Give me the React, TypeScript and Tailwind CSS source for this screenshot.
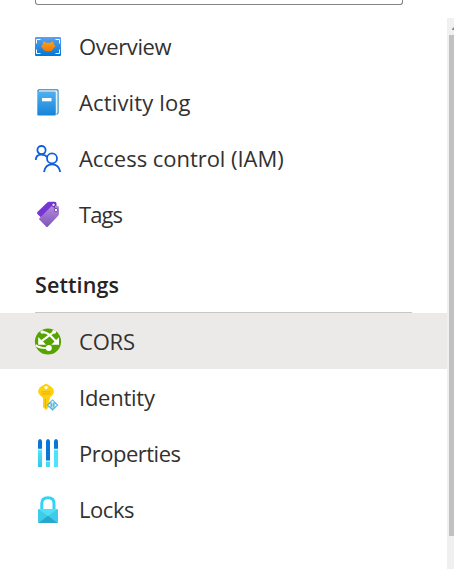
import type { ReactNode } from "react";

function Icon({ children }: { children: ReactNode }) {
  return (
    <svg width="28" height="28" viewBox="0 0 28 28" className="shrink-0" fill="none" aria-hidden="true">
      {children}
    </svg>
  );
}

const OverviewIcon = () => (
  <Icon>
    <defs>
      <linearGradient id="ov" x1="0" y1="0" x2="0" y2="1"><stop stopColor="#5ea0ef" /><stop offset="1" stopColor="#0078d4" /></linearGradient>
      <linearGradient id="ovo" x1="0" y1="0" x2="0" y2="1"><stop stopColor="#faa21d" /><stop offset="1" stopColor="#f07800" /></linearGradient>
    </defs>
    <rect x="1" y="4" width="26" height="19" rx="1" fill="url(#ov)" />
    <path d="M2.5 10.5V6.5H6.5M21.5 6.5H25.5V10.5M25.5 16.5V20.5H21.5M6.5 20.5H2.5V16.5" stroke="#fff" strokeWidth="1" />
    <path d="M9.5 8.2L12.5 9.7H16L19 8.2L20 11.2L21.5 13.5L19.5 15.5L17.5 18L14.5 18.5L11 18L9 16L7 13.5L8.6 11.5Z" fill="url(#ovo)" />
  </Icon>
);

const LogIcon = () => (
  <Icon>
    <defs><linearGradient id="lg" x1="0" y1="0" x2="0" y2="1"><stop stopColor="#50b0ee" /><stop offset="1" stopColor="#1683da" /></linearGradient></defs>
    <path d="M4 3V1.8Q4 .8 5.5 .8H23.2Q24 .8 24 1.8V24Q24 25 22 25" stroke="#277fb5" strokeWidth="1.2" />
    <path d="M5 2H22.8V24.3H21" stroke="#d8effb" strokeWidth="1" />
    <rect x="3.3" y="2.6" width="18.5" height="24" rx="1" fill="url(#lg)" />
    <rect x="8" y="9" width="9.5" height="3.3" fill="#fff" />
  </Icon>
);

const PeopleIcon = () => (
  <Icon>
    <g stroke="#0f5fdc" strokeWidth="1.8">
      <circle cx="7.5" cy="5.1" r="4.1" />
      <circle cx="18" cy="13.4" r="5" />
      <path d="M1.8 15C1.8 11.3 3.7 9.6 7.3 9.6C10.2 9.6 12 10.4 13.2 12.4M10 27C10.8 22 14 19.3 18.2 19.3C22.5 19.3 25.3 22 26.3 27" />
    </g>
  </Icon>
);

const TagsIcon = () => (
  <Icon>
    <defs><linearGradient id="tg" x1="0" y1="0" x2="0" y2="1"><stop stopColor="#b78be2" /><stop offset="1" stopColor="#7c55b5" /></linearGradient></defs>
    <path d="M13.5 1.2Q14.2 .7 15 .7H20.5Q22.5 .7 22.5 2.5V7L7.5 17L3.4 13Q2.6 12 3.4 11Z" fill="#7736d3" />
    <path d="M17.6 5.1Q18.2 4.5 19 4.5H22.5Q25 4.5 25 6.5V12.8Q25 14 24.2 14.8L14 25.5Q13 26.5 12 25.5L5.2 18.6Q4.7 18 5.3 17.4Z" fill="url(#tg)" />
    <circle cx="19.5" cy="3.8" r="1.8" fill="#e8dafb" stroke="#4d248d" strokeWidth=".9" />
    <circle cx="22" cy="9" r="1.7" fill="#fff" stroke="#6940a6" strokeWidth=".9" />
    <path d="M19.5 5.6L21.3 7.5" stroke="#4d248d" strokeWidth=".8" />
  </Icon>
);

const CorsIcon = () => (
  <Icon>
    <defs><clipPath id="cc"><circle cx="14" cy="14.5" r="13.1" /></clipPath></defs>
    <g clipPath="url(#cc)">
      <rect width="28" height="28" fill="#57a300" />
      <path d="M8.5 5Q12.5 5 16.5 8.8L22 14.5M21 4.3L16 7.8L8 13.8" stroke="#fff" strokeWidth="2.1" />
      <path d="M4.2 10V17.8H12.2ZM25 10.2V17.8H17.2Z" fill="#fff" />
      <path d="M1.5 18Q5.5 21.4 13 21" stroke="#fff" strokeWidth="1.8" />
      <circle cx="8.2" cy="5" r="1.8" fill="#fff" />
      <circle cx="20.2" cy="4.8" r="2" fill="#fff" />
      <circle cx="14.8" cy="21" r="3" fill="#fff" />
    </g>
  </Icon>
);

const IdentityIcon = () => (
  <Icon>
    <path d="M9.2 2.2L11 1.1Q12 .6 13 1.1L14.8 2.2Q19.9 4.8 19.9 8.3Q19.9 11.6 15.8 14.7V16.8L14.8 18L15.8 19.2V20.5L14.8 21.7L15.8 23L12.6 26.5Q12 27.1 11.4 26.5L9 24V14.7Q4.1 11.6 4.1 8.3Q4.1 4.8 9.2 2.2Z" fill="#ffd012" />
    <circle cx="12" cy="4.6" r="1.7" fill="#fff" />
    <path d="M7.5 8.9H16.5M7.5 11H16.5" stroke="#e5ad0b" strokeWidth=".9" />
    <path d="M11.4 16V25" stroke="#f0ac00" strokeWidth="1.1" />
    <path d="M18.5 16.2L24.3 22L18.5 27.8L12.7 22Z" fill="#58b4d8" />
    <path d="M18.5 18.5L21.5 22.3L18.5 25.3L15.5 22.3ZM18.5 18.5V25.3" stroke="#c8edf8" strokeWidth=".7" />
    <circle cx="18.5" cy="18.7" r="1" fill="#fff" />
    <circle cx="15.5" cy="22.3" r="1" fill="#fff" />
    <circle cx="21.5" cy="22.3" r="1" fill="#fff" />
  </Icon>
);

const PropertiesIcon = () => (
  <Icon>
    <defs><linearGradient id="pr" x1="0" y1="1" x2="0" y2="0"><stop stopColor="#32c7e8" /><stop offset="1" stopColor="#50e6ff" /></linearGradient></defs>
    <rect x="4" y="10" width="4" height="18" rx=".6" fill="url(#pr)" />
    <rect x="12" y="22" width="4" height="6" rx=".6" fill="#42daf5" />
    <rect x="20" y="10" width="4" height="18" rx=".6" fill="#4ce3fc" />
    <path d="M4 10V2L5 .3H7L8 2V10ZM12 22V2L13 .3H15L16 2V22ZM20 10V2L21 .3H23L24 2V10Z" fill="#0878d4" />
    <path d="M3.4 9.8H8.6V11.2H3.4ZM11.4 21.4H16.6V22.8H11.4ZM19.4 9.8H24.6V11.2H19.4Z" fill="#c9f5fc" />
  </Icon>
);

const LockIcon = () => (
  <Icon>
    <path d="M7.8 15V8.5Q7.8 2.8 14 2.8Q20 2.8 20 8.5V15" stroke="#32d4f5" strokeWidth="3" />
    <rect x="4" y="14" width="20" height="14" rx="1" fill="#3ecae9" />
    <path d="M4.3 14.1H23.7L14 21Z" fill="#50e0f5" />
    <path d="M4.5 28L14 20.7L23.5 28Z" fill="#27a7ce" />
  </Icon>
);

type Item = { label: string; icon: ReactNode; text: string; active?: boolean };

const general: Item[] = [
  { label: "Overview", icon: <OverviewIcon />, text: "pb-0.5 tracking-[-0.4px]" },
  { label: "Activity log", icon: <LogIcon />, text: "pb-0.5 tracking-[0.15px]" },
  { label: "Access control (IAM)", icon: <PeopleIcon />, text: "pb-0.5 tracking-[-0.04px]" },
  { label: "Tags", icon: <TagsIcon />, text: "pb-0.5 tracking-[-0.9px]" },
];

const settings: Item[] = [
  { label: "CORS", icon: <CorsIcon />, text: "tracking-[-0.2px]", active: true },
  { label: "Identity", icon: <IdentityIcon />, text: "tracking-[-0.25px]" },
  { label: "Properties", icon: <PropertiesIcon />, text: "tracking-[-0.5px]" },
  { label: "Locks", icon: <LockIcon />, text: "tracking-[-0.45px]" },
];

function MenuItem({ label, icon, text, active }: Item) {
  return (
    <li className={`flex h-14 items-center gap-[17px] pl-[34px] ${active ? "bg-[#ebeae9]" : ""}`}>
      {icon}
      <span className={`whitespace-nowrap text-[22px] leading-7 text-[#323130] ${text}`}>{label}</span>
    </li>
  );
}

export default function App() {
  return (
    <div className="flex h-[569px] w-[454px] overflow-hidden bg-white font-['Open_Sans',sans-serif]">
      <nav className="w-[447px] shrink-0">
        <div className="ml-[35px] h-[5px] w-[368px] rounded-b-[3px] border border-t-0 border-[#858483]" />
        <ul className="mt-[14px]">{general.map((item) => <MenuItem key={item.label} {...item} />)}</ul>
        <div className="ml-[35px] flex h-[70px] w-[377px] items-center border-b border-[#c8c6c4] pt-[14px]">
          <h2 className="text-[21.5px] font-semibold leading-7 tracking-[0.1px] text-[#252423]">Settings</h2>
        </div>
        <ul>{settings.map((item) => <MenuItem key={item.label} {...item} />)}</ul>
      </nav>
      <div className="mt-[18px] flex w-[7px] flex-col items-end bg-[#f0f0f0]">
        <div className="flex h-[17px] w-[2px] items-center">
          <svg width="2" height="3" viewBox="0 0 2 3" className="mt-[3px]"><path d="M0 3V2L2 0V3Z" fill="#888" /></svg>
        </div>
        <div className="h-[501px] w-[5px] bg-[#c1c1c1]" />
      </div>
    </div>
  );
}
